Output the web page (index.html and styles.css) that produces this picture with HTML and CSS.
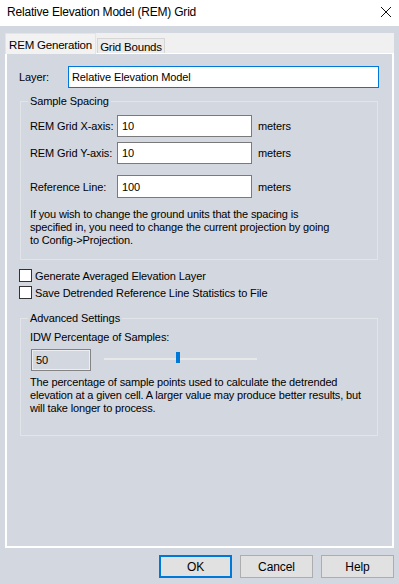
FILE: index.html
```html
<!DOCTYPE html>
<html>
<head>
<meta charset="utf-8">
<link rel="stylesheet" href="styles.css">
</head>
<body>
<div class="dialog">
  <div class="titlebar">
    <span class="title">Relative Elevation Model (REM) Grid</span>
    <svg class="close" width="12" height="12" viewBox="0 0 12 12"><path d="M1 1 L11 11 M11 1 L1 11" stroke="#111" stroke-width="1" fill="none"/></svg>
  </div>
  <div class="tabs">
    <div class="tabstrip">
      <div class="tab active">REM Generation</div>
      <div class="tab">Grid Bounds</div>
    </div>
    <div class="panel">
      <div class="row layer-row">
        <span class="lbl-layer">Layer:</span>
        <div class="input focused">Relative Elevation Model</div>
      </div>
      <fieldset class="group spacing">
        <legend>Sample Spacing</legend>
        <div class="row field-row">
          <span class="lbl">REM Grid X-axis:</span>
          <div class="input num">10</div>
          <span class="unit">meters</span>
        </div>
        <div class="row field-row r2">
          <span class="lbl">REM Grid Y-axis:</span>
          <div class="input num">10</div>
          <span class="unit">meters</span>
        </div>
        <div class="row field-row r3">
          <span class="lbl">Reference Line:</span>
          <div class="input num tall">100</div>
          <span class="unit">meters</span>
        </div>
        <p class="note">If you wish to change the ground units that the spacing is<br>specified in, you need to change the current projection by going<br>to Config-&gt;Projection.</p>
      </fieldset>
      <div class="check-row first"><span class="box"></span><span>Generate Averaged Elevation Layer</span></div>
      <div class="check-row"><span class="box"></span><span>Save Detrended Reference Line Statistics to File</span></div>
      <fieldset class="group advanced">
        <legend>Advanced Settings</legend>
        <div class="idw-label">IDW Percentage of Samples:</div>
        <div class="row slider-row">
          <div class="input readonly">50</div>
          <div class="slider"><div class="track"></div><div class="thumb"></div></div>
        </div>
        <p class="note adv-note">The percentage of sample points used to calculate the detrended<br>elevation at a given cell. A larger value may produce better results, but<br>will take longer to process.</p>
      </fieldset>
    </div>
  </div>
  <div class="buttons">
    <div class="btn default">OK</div>
    <div class="btn">Cancel</div>
    <div class="btn">Help</div>
  </div>
</div>
</body>
</html>
```

FILE: styles.css
```css
* { box-sizing: border-box; }
html, body { margin: 0; padding: 0; }
body {
  width: 399px;
  height: 584px;
  overflow: hidden;
  background: #d3d7df;
  font-family: "Liberation Sans", Arial, sans-serif;
  font-size: 11px;
  letter-spacing: -0.1px;
  color: #000;
}
.dialog { display: flex; flex-direction: column; height: 584px; }
.titlebar {
  height: 26px;
  background: #fff;
  display: flex;
  align-items: center;
  justify-content: space-between;
  padding: 0 7px 2px 7px;
}
.title { font-size: 12px; letter-spacing: -0.2px; color: #000; white-space: nowrap; }
.tabs { margin: 7px 5px 0 5px; display: flex; flex-direction: column; }
.tabstrip {
  height: 20px;
  background: #f0f0f0;
  display: flex;
  align-items: flex-end;
}
.tab {
  font-size: 11.5px;
  letter-spacing: -0.2px;
  white-space: nowrap;
  display: flex;
  align-items: center;
  justify-content: center;
  border: 1px solid #d6d6d6;
  border-bottom: none;
  background: #ececec;
  height: 15px;
  padding: 1px 0 0 0;
}
.tab.active {
  height: 21px;
  width: 91px;
  margin-bottom: -1px;
  border-color: #e4e4e4;
  background: #f2f2f2;
  z-index: 1;
}
.tab + .tab { margin-left: 1px; width: 68px; }
.panel {
  height: 495px;
  border: 2px solid #fff;
  border-top-width: 1px;
  padding: 12px 13px 0 12px;
  display: flex;
  flex-direction: column;
}
.row { display: flex; align-items: center; white-space: nowrap; }
.layer-row { height: 22px; }
.lbl-layer { width: 49px; }
.input {
  height: 22px;
  background: #fff;
  border: 1px solid #7a7a7a;
  display: flex;
  align-items: center;
  padding-left: 3px;
  font-size: 11px;
}
.input.focused { flex: 1; border-color: #0078d7; }
.group {
  margin: 6px 1px 0 1px;
  padding: 7px 9px 0 9px;
  border: 1px solid #e1e4e9;
  min-width: 0;
}
.group legend {
  padding: 0 2px;
  margin-left: -2px;
  line-height: 14px;
  font-size: 11px;
  white-space: nowrap;
}
.field-row { height: 22px; }
.field-row.r2 { margin-top: 5px; }
.field-row.r3 { margin-top: 11px; height: 23px; }
.lbl { width: 87px; }
.input.num { width: 135px; padding-left: 4px; }
.input.tall { height: 23px; }
.unit { margin-left: 6px; }
.note { margin: 10px 0 13px 0; line-height: 13px; white-space: nowrap; letter-spacing: -0.15px; }
.spacing { height: 166px; }
.check-row { display: flex; align-items: center; height: 17px; white-space: nowrap; }
.check-row.first { margin-top: 7px; }
.box {
  width: 13px; height: 13px;
  background: #fff;
  border: 1px solid #333;
  margin-right: 3px;
  flex: none;
}
.advanced { margin-top: 10px; height: 125px; padding-top: 6px; }
.idw-label { line-height: 13px; white-space: nowrap; }
.slider-row { margin-top: 5px; height: 22px; }
.input.readonly {
  width: 60px;
  margin-left: 1px;
  background: #d3d7df;
  border: 1px solid #848484;
  box-shadow: inset 0 0 0 1px #eceef2;
  padding-left: 4px;
}
.slider { position: relative; width: 153px; height: 22px; margin-left: 13px; }
.track { position: absolute; left: 0; right: 0; top: 9px; height: 2px; background: #e8e8e8; }
.thumb { position: absolute; left: 72px; top: 3px; width: 4px; height: 11px; background: #0078d7; }
.adv-note { margin-top: 5px; }
.buttons {
  display: flex;
  justify-content: flex-end;
  gap: 8px;
  margin: 7px 5px 0 0;
}
.btn {
  width: 73px;
  height: 23px;
  background: #e1e1e1;
  border: 1px solid #adadad;
  display: flex;
  align-items: center;
  justify-content: center;
  font-size: 12px;
}
.btn.default { border: 2px solid #0078d7; }
```
